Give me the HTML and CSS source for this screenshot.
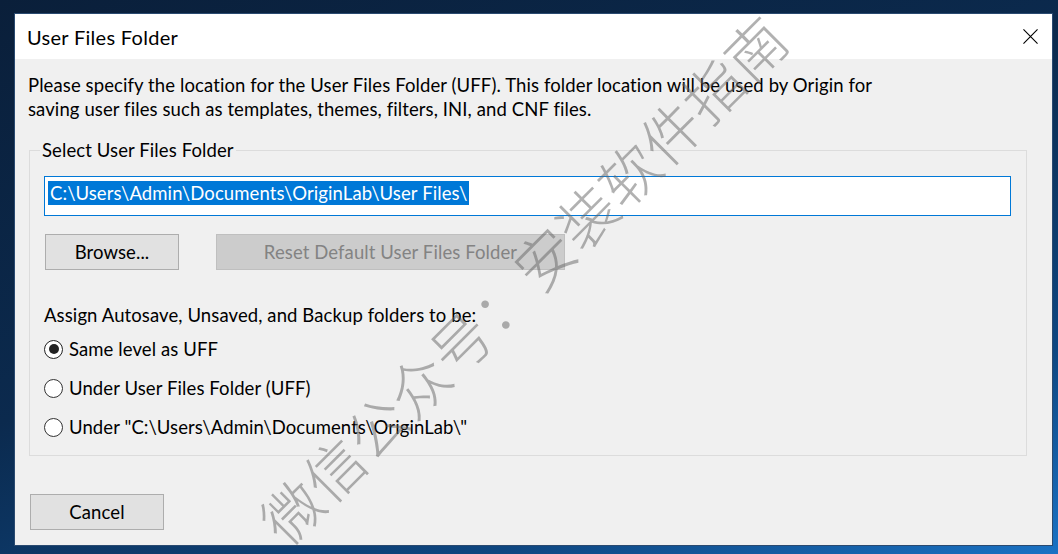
FILE: index.html
```html
<!DOCTYPE html>
<html lang="en">
<head>
<meta charset="utf-8">
<title>User Files Folder</title>
<link rel="stylesheet" href="styles.css">
</head>
<body>
<div class="desktop">
  <div class="dialog">
    <div class="titlebar">
      <span class="title">User Files Folder</span>
      <div class="close" aria-label="Close">
        <svg width="16" height="16" viewBox="0 0 16 16"><path d="M0.5 0.5 L15.5 15.5 M15.5 0.5 L0.5 15.5" stroke="#000" stroke-width="1.2" fill="none"/></svg>
      </div>
    </div>
    <div class="content">
      <p class="desc">Please specify the location for the User Files Folder (UFF). This folder location will be used by Origin for<br>saving user files such as templates, themes, filters, INI, and CNF files.</p>
      <fieldset class="group">
        <legend>Select User Files Folder</legend>
        <div class="path"><span class="sel">C:\Users\Admin\Documents\OriginLab\User Files\</span></div>
        <div class="btnrow">
          <div class="btn browse">Browse...</div>
          <div class="btn reset">Reset Default User Files Folder</div>
        </div>
        <div class="assign">Assign Autosave, Unsaved, and Backup folders to be:</div>
        <div class="radios">
          <div class="radio checked"><span class="circle"></span>Same level as UFF</div>
          <div class="radio"><span class="circle"></span>Under User Files Folder (UFF)</div>
          <div class="radio"><span class="circle"></span>Under "C:\Users\Admin\Documents\OriginLab\"</div>
        </div>
      </fieldset>
      <div class="footer">
        <div class="btn cancel">Cancel</div>
      </div>
    </div>
  </div>
  <div class="watermark">微信公众号：安装软件指南</div>
</div>
</body>
</html>
```
FILE: styles.css
```css
html, body {
  margin: 0;
  padding: 0;
}
body {
  width: 1058px;
  height: 554px;
  overflow: hidden;
  background: linear-gradient(160deg, #0a1f3a 0%, #0b2a4e 45%, #0e4680 78%, #1a72c4 100%);
  font-family: Lato, "Noto Sans", sans-serif;
  font-size: 18.5px;
  letter-spacing: 0.1px;
  line-height: 24px;
  color: #000;
}
.desktop {
  position: relative;
  height: 554px;
  box-sizing: border-box;
  padding: 13px 5px 0 14px;
}
.dialog {
  width: 1039px;
  height: 533px;
  box-sizing: border-box;
  border: 1px solid #2a4a70;
  background: #f0f0f0;
  display: flex;
  flex-direction: column;
}
.titlebar {
  height: 45px;
  flex: none;
  background: #fff;
  display: flex;
  align-items: center;
  justify-content: space-between;
  padding-left: 12px;
}
.title {
  font-size: 20px;
  letter-spacing: 0.3px;
}
.close {
  width: 44px;
  height: 45px;
  display: flex;
  align-items: center;
  justify-content: center;
}
.close svg {
  width: 15px;
  height: 15px;
}
.content {
  flex: 1;
  display: flex;
  flex-direction: column;
}
.desc {
  margin: 14px 0 0 13px;
}
.group {
  margin: 17px 0 0 14px;
  width: 998px;
  box-sizing: border-box;
  border: 1px solid #dcdcdc;
  padding: 0 15px 16px 14px;
  min-width: 0;
}
.group legend {
  padding: 0 2px;
  margin-left: -4px;
}
.path {
  margin-top: 14px;
  height: 40px;
  box-sizing: border-box;
  border: 1px solid #0078d7;
  background: #fff;
  padding: 4px 0 0 3px;
}
.sel {
  display: inline-block;
  background: #0078d7;
  color: #fff;
  height: 24px;
  padding: 0 1px 0 2px;
}
.btnrow {
  display: flex;
  gap: 37px;
  margin-top: 18px;
  margin-left: 1px;
}
.btn {
  height: 36px;
  box-sizing: border-box;
  border: 1px solid #adadad;
  background: #e1e1e1;
  display: flex;
  align-items: center;
  justify-content: center;
}
.browse {
  width: 134px;
}
.reset {
  width: 349px;
  background: #cccccc;
  border-color: #bfbfbf;
  color: #838383;
}
.assign {
  margin-top: 33px;
}
.radios {
  margin-top: 10px;
  display: flex;
  flex-direction: column;
  gap: 15px;
}
.radio {
  display: flex;
  align-items: center;
  height: 24px;
  gap: 6px;
}
.circle {
  width: 19px;
  height: 19px;
  box-sizing: border-box;
  border: 1px solid #333;
  border-radius: 50%;
  background: #fff;
  display: flex;
  align-items: center;
  justify-content: center;
}
.checked .circle {
  border-color: #222;
}
.checked .circle::after {
  content: "";
  width: 10px;
  height: 10px;
  border-radius: 50%;
  background: #222;
}
.footer {
  margin: 38px 0 0 15px;
}
.cancel {
  width: 134px;
}
.watermark {
  position: absolute;
  left: 522px;
  top: 278px;
  transform: translate(-50%, -50%) rotate(-45deg);
  font-family: "Noto Sans CJK SC", sans-serif;
  font-weight: 200;
  font-size: 59px;
  letter-spacing: 0.5px;
  line-height: 1;
  white-space: nowrap;
  color: rgba(100, 100, 100, 0.5);
  pointer-events: none;
}
```
